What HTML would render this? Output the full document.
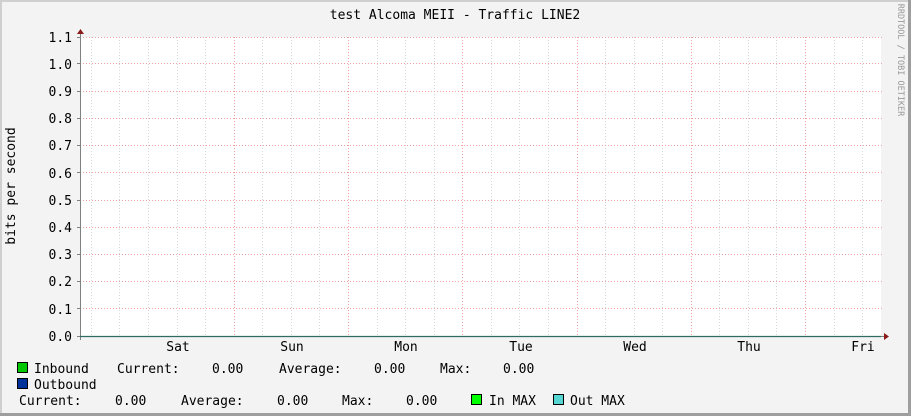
<!DOCTYPE html>
<html><head><meta charset="utf-8"><style>
html,body{margin:0;padding:0;background:#f3f3f3}
svg{display:block}
text{font-family:"DejaVu Sans Mono","Liberation Mono",monospace;fill:#000}
</style></head><body>
<svg width="911" height="416" xmlns="http://www.w3.org/2000/svg">
<rect x="0" y="0" width="911" height="416" fill="#f3f3f3"/>
<rect x="0" y="0" width="911" height="2" fill="#cfcfcf"/>
<rect x="0" y="0" width="2" height="416" fill="#cfcfcf"/>
<rect x="908" y="0" width="3" height="416" fill="#9e9e9e"/>
<rect x="0" y="413" width="911" height="3" fill="#9e9e9e"/>
<rect x="80" y="37" width="801" height="299" fill="#fff"/>
<g stroke="#d6d6d6" stroke-width="1" stroke-dasharray="1,2">
<path d="M91.5 37V336M119.5 37V336M148.5 37V336M177.5 37V336M205.5 37V336M262.5 37V336M291.5 37V336M319.5 37V336M377.5 37V336M405.5 37V336M434.5 37V336M491.5 37V336M519.5 37V336M548.5 37V336M605.5 37V336M634.5 37V336M662.5 37V336M719.5 37V336M748.5 37V336M776.5 37V336M834.5 37V336M862.5 37V336"/>
</g>
<g stroke="#f0a0a0" stroke-width="1" stroke-dasharray="1,2">
<path d="M234.5 37V336M348.5 37V336M462.5 37V336M577.5 37V336M691.5 37V336M805.5 37V336"/>
<path d="M80 37.5H883M80 63.5H883M80 91.5H883M80 118.5H883M80 145.5H883M80 172.5H883M80 200.5H883M80 227.5H883M80 254.5H883M80 281.5H883M80 308.5H883"/>
</g>
<g stroke="#808080" stroke-width="1">
<path d="M80.5 33V340M77 336.5H885"/>
<path d="M77 37.5H80M77 63.5H80M77 91.5H80M77 118.5H80M77 145.5H80M77 172.5H80M77 200.5H80M77 227.5H80M77 254.5H80M77 281.5H80M77 308.5H80"/>
</g>
<path d="M80 336.5H881" stroke="#2e6b63" stroke-width="1.3"/>
<path d="M77 34L80.5 29L84 34Z" fill="#8b1a1a"/>
<path d="M884 333L889 336.5L884 340Z" fill="#8b1a1a"/>
<g font-size="13" text-anchor="end">
<text x="72" y="42">1.1</text><text x="72" y="69">1.0</text><text x="72" y="96">0.9</text>
<text x="72" y="123">0.8</text><text x="72" y="150">0.7</text><text x="72" y="178">0.6</text>
<text x="72" y="205">0.5</text><text x="72" y="232">0.4</text><text x="72" y="259">0.3</text>
<text x="72" y="286">0.2</text><text x="72" y="314">0.1</text><text x="72" y="341">0.0</text>
</g>
<g font-size="13" text-anchor="middle">
<text x="178" y="351">Sat</text><text x="292" y="351">Sun</text><text x="406" y="351">Mon</text>
<text x="521" y="351">Tue</text><text x="635" y="351">Wed</text><text x="749" y="351">Thu</text>
<text x="863" y="351">Fri</text>
<text x="455" y="19">test Alcoma MEII - Traffic LINE2</text>
<text transform="translate(15,186) rotate(-90)">bits per second</text>
</g>
<text transform="translate(898,60) rotate(90)" font-size="8.5" text-anchor="middle" style="fill:#999">RRDTOOL / TOBI OETIKER</text>
<g font-size="13">
<rect x="17.5" y="362.5" width="10" height="10" fill="#00c800" stroke="#000"/>
<text x="34" y="373">Inbound</text><text x="117" y="373">Current:</text><text x="212" y="373">0.00</text>
<text x="279" y="373">Average:</text><text x="374" y="373">0.00</text><text x="440" y="373">Max:</text><text x="503" y="373">0.00</text>
<rect x="17.5" y="378.5" width="10" height="10" fill="#003399" stroke="#000"/>
<text x="34" y="389">Outbound</text>
<text x="19" y="405">Current:</text><text x="115" y="405">0.00</text><text x="181" y="405">Average:</text>
<text x="277" y="405">0.00</text><text x="342" y="405">Max:</text><text x="406" y="405">0.00</text>
<rect x="471.5" y="394.5" width="10" height="10" fill="#00ff00" stroke="#000"/>
<text x="489" y="405">In MAX</text>
<rect x="553.5" y="394.5" width="10" height="10" fill="#55d6d3" stroke="#000"/>
<text x="570" y="405">Out MAX</text>
</g>
</svg>
</body></html>
